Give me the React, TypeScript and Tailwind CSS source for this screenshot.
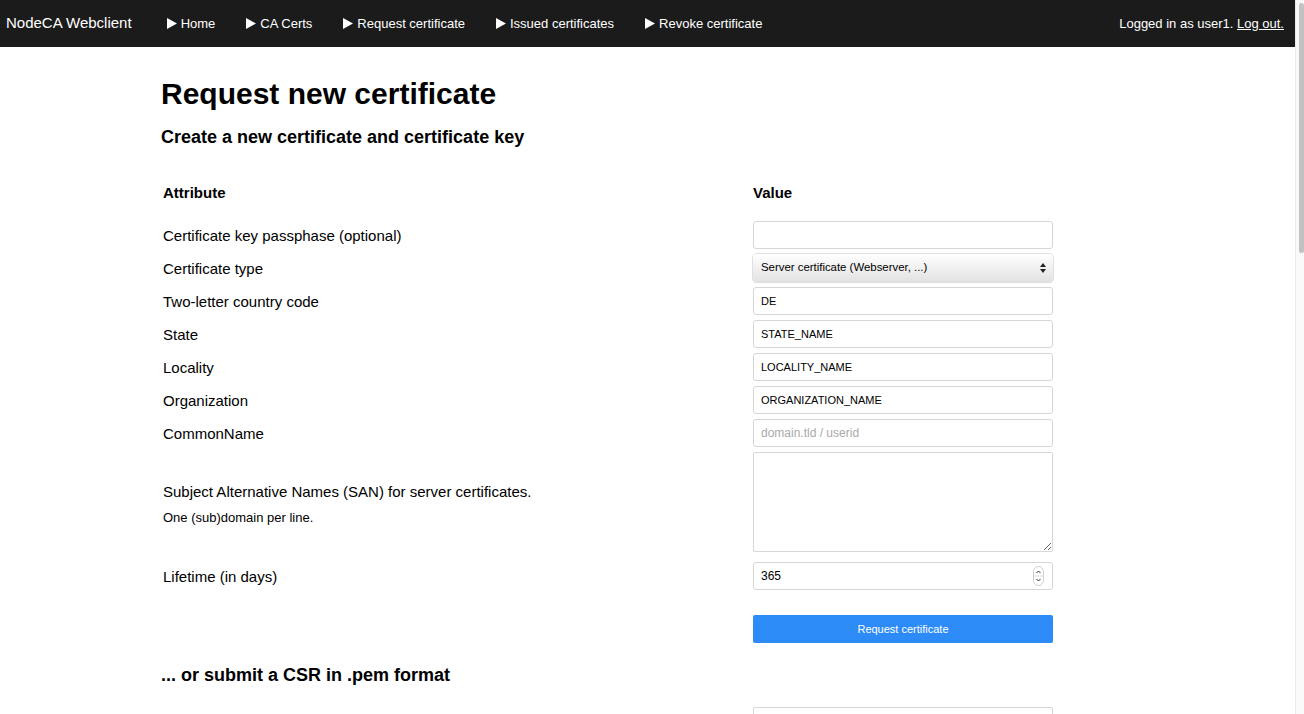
import React from "react";

const font = { fontFamily: '"Liberation Sans", Arial, sans-serif' };

function NavItem({ label }: { label: string }) {
  return (
    <a className="flex items-center gap-[4px] text-white text-[13px]">
      <svg width="10" height="11" viewBox="0 0 10 11" className="shrink-0">
        <path d="M0 0 L10 5.5 L0 11 Z" fill="#fff" />
      </svg>
      <span>{label}</span>
    </a>
  );
}

function TextField({ value, placeholder }: { value?: string; placeholder?: string }) {
  return (
    <input
      type="text"
      defaultValue={value}
      placeholder={placeholder}
      className="w-[300px] h-[28px] rounded-[3px] border border-[#d6d6d6] bg-white px-[7px] text-[11px] text-black placeholder:text-[12px] placeholder:text-[#a9a9a9] outline-none"
      style={font}
    />
  );
}

function Row({
  label,
  children,
  className = "",
}: {
  label: React.ReactNode;
  children: React.ReactNode;
  className?: string;
}) {
  return (
    <div className={"flex items-center pl-[2px] " + className}>
      <div className="w-[590px] pt-[2px] text-[15px] leading-[18px] text-black">{label}</div>
      <div>{children}</div>
    </div>
  );
}

export default function App() {
  return (
    <div className="flex h-[714px] w-full overflow-hidden bg-white" style={font}>
      <div className="flex-1 min-w-0 overflow-hidden">
        {/* top bar */}
        <nav className="flex h-[47px] items-center bg-[#1b1b1b] pl-[6px] pr-[11px]">
          <span className="text-[15px] text-white">NodeCA Webclient</span>
          <div className="ml-[35px] flex items-center gap-[31px]">
            <NavItem label="Home" />
            <NavItem label="CA Certs" />
            <NavItem label="Request certificate" />
            <NavItem label="Issued certificates" />
            <NavItem label="Revoke certificate" />
          </div>
          <div className="ml-auto text-[13px] text-white">
            Logged in as user1. <a className="underline">Log out.</a>
          </div>
        </nav>

        <main className="pl-[161px] pt-[30px]">
          <h1 className="text-[30px] font-bold leading-[34px] text-black">Request new certificate</h1>
          <h2 className="mt-[15px] text-[18px] font-bold leading-[22px] text-black">
            Create a new certificate and certificate key
          </h2>

          <div className="mt-[36px] flex pl-[2px] text-[15px] font-bold leading-[18px] text-black">
            <div className="w-[590px]">Attribute</div>
            <div>Value</div>
          </div>

          <div className="mt-[19px] flex flex-col gap-[5px]">
            <Row label="Certificate key passphase (optional)">
              <input
                type="password"
                className="w-[300px] h-[28px] rounded-[3px] border border-[#d6d6d6] bg-white outline-none"
              />
            </Row>
            <Row label="Certificate type">
              <div className="relative w-[300px] h-[28px]">
                <select
                  className="h-full w-full appearance-none rounded-[4px] bg-linear-to-b from-white to-[#e2e2e2] pl-[8px] text-[11.4px] text-black shadow-[0_0_0_1px_#e0e0e0,0_1px_1px_rgba(0,0,0,0.15)] outline-none"
                  style={font}
                  defaultValue="server"
                >
                  <option value="server">Server certificate (Webserver, ...)</option>
                </select>
                <svg
                  width="6"
                  height="10"
                  viewBox="0 0 6 10"
                  className="pointer-events-none absolute right-[7px] top-[9px]"
                >
                  <path d="M0 4 L3 0 L6 4 Z M0 6 L3 10 L6 6 Z" fill="#222" />
                </svg>
              </div>
            </Row>
            <Row label="Two-letter country code">
              <TextField value="DE" />
            </Row>
            <Row label="State">
              <TextField value="STATE_NAME" />
            </Row>
            <Row label="Locality">
              <TextField value="LOCALITY_NAME" />
            </Row>
            <Row label="Organization">
              <TextField value="ORGANIZATION_NAME" />
            </Row>
            <Row label="CommonName">
              <TextField placeholder="domain.tld / userid" />
            </Row>
            <Row
              label={
                <div className="pt-[2px]">
                  <div>Subject Alternative Names (SAN) for server certificates.</div>
                  <div className="mt-[9px] text-[13px] leading-[15px]">One (sub)domain per line.</div>
                </div>
              }
            >
              <textarea className="block w-[300px] h-[100px] rounded-[2px] border border-[#d6d6d6] bg-white outline-none" />
            </Row>
            <Row label="Lifetime (in days)" className="mt-[5px]">
              <div className="relative w-[300px] h-[28px]">
                <input
                  type="text"
                  defaultValue="365"
                  className="h-full w-full rounded-[3px] border border-[#d6d6d6] bg-white px-[7px] text-[12px] text-black outline-none"
                  style={font}
                />
                <svg
                  width="11"
                  height="20"
                  viewBox="0 0 11 20"
                  className="pointer-events-none absolute right-[9px] top-[4px]"
                >
                  <rect x="0.5" y="0.5" width="10" height="19" rx="5" fill="#fff" stroke="#cfcfcf" />
                  <line x1="1" y1="10" x2="10" y2="10" stroke="#dcdcdc" />
                  <path d="M3.5 7 L5.5 5 L7.5 7" fill="none" stroke="#333" strokeWidth="1" />
                  <path d="M3.5 13 L5.5 15 L7.5 13" fill="none" stroke="#333" strokeWidth="1" />
                </svg>
              </div>
            </Row>
            <Row label="" className="mt-[20px]">
              <button
                className="w-[300px] h-[28px] rounded-[2px] bg-[#2d8bf7] text-[11px] text-white"
                style={font}
              >
                Request certificate
              </button>
            </Row>
          </div>

          <h2 className="mt-[21px] text-[18px] font-bold leading-[22px] text-black">
            ... or submit a CSR in .pem format
          </h2>

          <div className="mt-[21px] flex flex-col gap-[5px]">
            <Row label="">
              <textarea className="block w-[300px] h-[100px] rounded-[2px] border border-[#d6d6d6] bg-white outline-none" />
            </Row>
          </div>
        </main>
      </div>

      {/* scrollbar */}
      <div className="relative w-[9px] shrink-0 border-l border-[#ebebeb] bg-[#f9f9f9]">
        <div className="absolute left-[3px] right-0 top-[3px] h-[250px] rounded-full bg-[#c2c2c2]" />
      </div>
    </div>
  );
}
